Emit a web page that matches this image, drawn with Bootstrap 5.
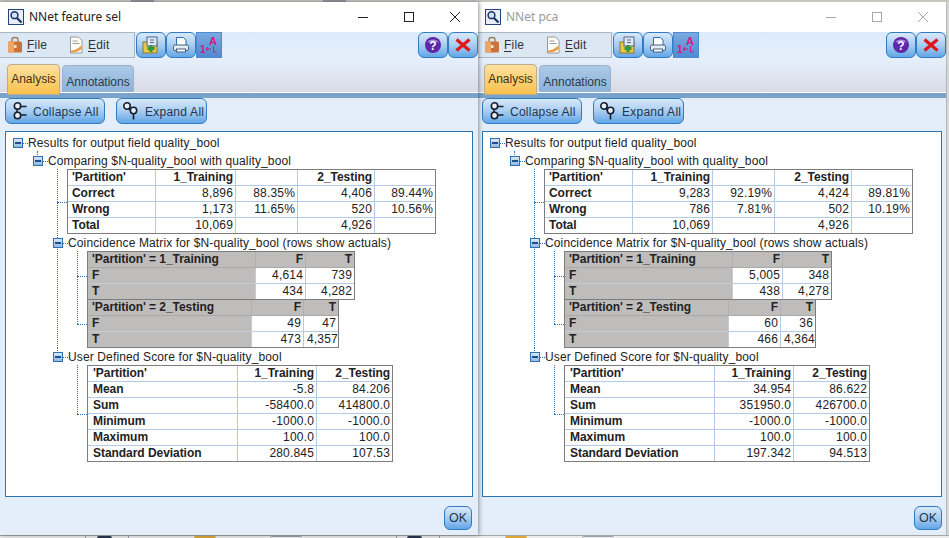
<!DOCTYPE html>
<html lang="en">
<head>
    <meta charset="UTF-8">
    <meta name="viewport" content="width=device-width, initial-scale=1.0">
    <title>NNet analysis</title>
    <link href="https://cdn.jsdelivr.net/npm/bootstrap@5.3.0/dist/css/bootstrap.min.css" rel="stylesheet">
    <style>
        html, body { height: 538px; overflow: hidden; }
        body {
            margin: 0;
            font-family: "Liberation Sans", Arial, sans-serif;
            font-size: 12px;
            color: #222;
            background: #dcdcdc;
        }
        .desk {
            position: relative;
            height: 538px;
            padding: 2px 0 3px;
            background: linear-gradient(#c9c5bf 0 2px, #d6d6d6 2px 535px, #a6a6a6 535px 536px, #ececec 536px);
        }
        .desk-bit { position: absolute; display: block; }
        .bit-top-a { left: 131px; top: 0; width: 23px; height: 2px; background: #8f939e; }
        .bit-top-b { left: 323px; top: 0; width: 23px; height: 2px; background: #8f939e; }
        .bit-frame { bottom: 0; width: 44px; height: 2px; border: solid #9aa0ae; border-width: 0 1px; }
        .bit-dark { bottom: 0; width: 15px; height: 2px; background: #26304a; border-radius: 6px 6px 0 0; }
        .bit-gold { bottom: 0; width: 22px; height: 2px; background: #dca436; border-radius: 10px 10px 0 0; }
        .bit-ring { bottom: 0; width: 32px; height: 2px; border-top: 1px solid #9aa0ae; border-radius: 14px 14px 0 0; }
        .at-85 { left: 85px; }
        .at-97 { left: 97px; }
        .at-194 { left: 194px; }
        .at-270 { left: 270px; }
        .at-396 { left: 396px; }
        .at-407 { left: 407px; }
        .at-505 { left: 505px; }
        .at-582 { left: 582px; }

        .win {
            position: relative;
            display: flex;
            flex-direction: column;
            flex: none;
            background: #e3eefa;
        }
        .win-a { width: 478px; z-index: 2; box-shadow: 1px 0 4px rgba(60, 60, 60, .55); }
        .win-b { width: 470px; margin-left: -1px; border-right: 1px solid #b8b8b8; }
        .win-b .win-title { color: #9a9a9a; }
        .win-b .win-ctl svg { stroke: #a8a8a8; }

        .title-bar { height: 30px; background: #fff; flex: none; }
        .title-ico { width: 16px; height: 16px; margin: 0 5px 0 8px; }
        .win-title { font-family: "Noto Sans", sans-serif; font-size: 12px; }
        .win-ctl { width: 46px; height: 30px; display: flex; align-items: center; justify-content: center; }
        .win-ctl svg { width: 12px; height: 12px; stroke: #222; fill: none; }

        .head-band {
            height: 60px;
            flex: none;
            background: linear-gradient(#dbeafb, #e5effb 45%, #d8dbe6);
            border-bottom: 1px solid #fff;
            box-sizing: content-box;
        }
        .menu-group {
            width: 135px;
            height: 26px;
            margin-right: 1px;
            background: #dbe7f3;
            border: 1px solid #a9b7c6;
            border-left: 0;
        }
        .menu-item { width: 61px; padding-left: 7px; color: #333; letter-spacing: .2px; }
        .menu-item svg { width: 16px; height: 18px; margin-right: 4px; }
        .menu-item u { text-underline-offset: 2px; }

        .blue-btn {
            --bs-btn-padding-x: 0;
            --bs-btn-padding-y: 0;
            --bs-btn-font-size: 12px;
            --bs-btn-line-height: 1;
            --bs-btn-color: #22364d;
            --bs-btn-hover-color: #22364d;
            --bs-btn-border-color: #2f7cc4;
            --bs-btn-hover-border-color: #2f7cc4;
            --bs-btn-border-radius: 6px;
            display: inline-flex;
            align-items: center;
            justify-content: center;
            background: linear-gradient(#d8e9fb, #a9cdf1 50%, #62a6e6);
        }
        .blue-btn:hover { background: linear-gradient(#d8e9fb, #a9cdf1 50%, #62a6e6); }
        .tool-btn { width: 30px; height: 26px; }
        .tool-btn svg { width: 18px; height: 18px; }
        .tool-on { background: linear-gradient(#7ba9e0, #4f8bd2); border-radius: 0; border-color: #4f8bd2; width: 26px; }
        .tool-on:hover { background: linear-gradient(#7ba9e0, #4f8bd2); }
        .tool-end { margin-left: auto; }
        .act-btn { height: 26px; letter-spacing: .25px; padding-top: 1px; justify-content: flex-start; }
        .act-btn svg { width: 18px; height: 20px; margin-top: -1px; }
        .act-collapse { width: 100px; padding-left: 6px; gap: 3px; }
        .act-expand { width: 91px; margin-left: 11px; padding-left: 5px; gap: 5px; }
        .ok-btn { width: 28px; height: 24px; --bs-btn-font-size: 12.5px; }

        .tab-row { height: 34px; --bs-nav-tabs-border-width: 0; padding-left: 7px; gap: 2px; align-items: flex-end; border: 0; }
        .tab-pill {
            display: block;
            text-align: center;
            color: #2c3a48;
            border: 1px solid #9db2c8;
            border-radius: 4px 4px 0 0;
            background: linear-gradient(#adcae8, #8db2d9);
            width: 72px;
            height: 27px;
            line-height: 32px;
        }
        .tab-on {
            width: 53px;
            height: 31px;
            line-height: 29px;
            margin-bottom: -3px;
            color: #3b3113;
            border-color: #bcae8c;
            background: linear-gradient(#fde0a0, #fbc14d);
            position: relative;
            z-index: 1;
        }
        .tab-strip { height: 5px; background: #7aa3cb; flex: none; }
        .act-row { height: 33px; flex: none; padding: 0 0 0 5px; }

        .res-panel {
            height: 366px;
            flex: none;
            background: #fff;
            border: 1px solid #2b74b0;
            padding: 3px 0 0 7px;
            overflow: hidden;
        }
        .win-a .res-panel { margin: 0 5px; }
        .win-b .res-panel { margin: 0 4px 0 5px; }
        .foot-row { flex: 1; padding: 9px 6px 0 0; }
        .win-b .foot-row { padding-right: 4px; }

        .tree-list, .tree-list ul { list-style: none; margin: 0; padding: 0; }
        .tree-list ul { margin-left: 20px; }
        .tree-item { position: relative; }
        .tree-item::before {
            content: "";
            position: absolute;
            left: 4px;
            top: -2px;
            bottom: 0;
            border-left: 1px dotted #2b74b0;
        }
        .tree-root::before { display: none; }
        .tree-node { margin-top: 2px; }
        .tree-item.tree-node:last-child::before { bottom: auto; height: 10px; }
        .tree-leaf { padding-left: 14px; }
        .tree-leaf::before { top: 0; }
        .tree-leaf:last-child::before { bottom: 50%; }
        .tree-leaf::after {
            content: "";
            position: absolute;
            left: 4px;
            top: 50%;
            width: 10px;
            border-top: 1px dotted #2b74b0;
        }
        .tree-line { height: 16px; display: flex; align-items: center; position: relative; }
        .tree-box {
            position: relative;
            z-index: 1;
            width: 10px;
            height: 10px;
            flex: none;
            border: 1px solid #2f6fb0;
            background: linear-gradient(#d9e8f8, #8fb8e4);
        }
        .tree-box::after { content: ""; position: absolute; left: 1px; right: 1px; top: 3px; height: 2px; background: #1f4f86; }
        .tree-dots { width: 5px; margin-right: 0; border-top: 1px dotted #2b74b0; flex: none; }
        .tree-text { letter-spacing: .13px; white-space: nowrap; }

        .res-table {
            --bs-table-bg: transparent;
            --bs-table-color: #222;
            table-layout: fixed;
            width: auto;
            margin: 0 0 -1px;
            border-collapse: collapse;
            font-size: 12px;
            letter-spacing: .17px;
        }
        .res-table th, .res-table td {
            height: 16px;
            padding: 0 2px 0 3px;
            line-height: 15px;
            border: 1px solid #b4cbe3;
            text-align: right;
            font-weight: 400;
            white-space: nowrap;
            box-shadow: none;
        }
        .res-table { outline: 1px solid #7d7d7d; outline-offset: -1px; }
        .res-table th { font-weight: 700; letter-spacing: -.05px; }
        .res-table th:first-child { text-align: left; padding-left: 4px; }
        .table-score th:first-child { padding-left: 5px; }
        .table-comp { width: 368px; }
        .table-comp .col-1st { width: 88px; }
        .table-comp .col-2nd { width: 80px; }
        .table-comp .col-3rd { width: 62px; }
        .table-comp .col-4th { width: 77px; }
        .table-comp .col-5th { width: 61px; }
        .table-matrix { width: 267px; }
        .table-matrix .col-1st { width: 168px; }
        .table-matrix .col-2nd { width: 50px; }
        .table-matrix .col-3rd { width: 49px; }
        .table-matrix2 { width: 251px; }
        .table-matrix2 .col-1st { width: 164px; }
        .table-matrix2 .col-2nd { width: 52px; }
        .table-matrix2 .col-3rd { width: 35px; }
        .table-score { width: 305px; }
        .table-score .col-1st { width: 150px; }
        .table-score .col-2nd { width: 79px; }
        .table-score .col-3rd { width: 76px; }
        .res-table th.gray-cell { background: #bfbdbb; border-color: #c6ccd3; }
        .res-table tr:first-child .gray-cell { border-bottom-color: #a9a9a9; border-right-color: #b0b0b0; }
    </style>
</head>
<body>

    <!-- Iconos sin texto, compartidos por las dos ventanas -->
    <svg width="0" height="0" class="d-block position-absolute">
        <symbol id="ico-search" viewBox="0 0 16 16">
            <rect x=".5" y=".5" width="15" height="15" fill="#e8eef8" stroke="#27407e"/>
            <circle cx="6.5" cy="6.2" r="3.4" fill="#cfe4f8" stroke="#1d2f66" stroke-width="1.5"/>
            <path d="M9 9l4.5 4.5" stroke="#1d2f66" stroke-width="2.2"/>
        </symbol>
        <symbol id="ico-case" viewBox="0 0 16 18">
            <path d="M5 6V3.2C5 2 6 1.5 8 1.5s3 .5 3 1.7V6" fill="none" stroke="#9b7a55" stroke-width="1.3"/>
            <rect x="1" y="5.5" width="14" height="11" rx="1.5" fill="#c9743a"/>
            <path d="M1 5.5h6v11H2.5A1.5 1.5 0 0 1 1 15z" fill="#eea565"/>
            <rect x="7" y="9" width="2.5" height="3" fill="#f6e3c2"/>
        </symbol>
        <symbol id="ico-doc" viewBox="0 0 16 18">
            <path d="M2.5 1h8l3.500 3.500V17h-11.500z" fill="#fbfbf8" stroke="#9a9a9a"/>
            <path d="M4.500 5h5M4.500 7.500h7" stroke="#9c9c9c"/>
            <path d="M3 14.500c3 0 6-1 10.500-5V13c-3 2.500-6 3.500-10.500 3.500z" fill="#ee9a3a"/>
        </symbol>
        <symbol id="ico-grid" viewBox="0 0 18 18">
            <rect x="1" y="6" width="14" height="11" fill="#e8c64a" stroke="#8e7a2a"/>
            <rect x="5" y="1" width="10" height="9" fill="#dfe8f3" stroke="#51688a"/>
            <path d="M8 4h4M8 6.500h4" stroke="#51688a"/>
            <path d="M9 9v7M5.500 12.500h7" stroke="#2f9a36" stroke-width="3"/>
        </symbol>
        <symbol id="ico-print" viewBox="0 0 18 18">
            <path d="M4.500 1.500h7L14 4v6H4.500z" fill="#fff" stroke="#2e6dae"/>
            <rect x="1.500" y="9" width="15" height="5.500" rx="1.500" fill="#e5edf5" stroke="#47617f"/>
            <rect x="4.500" y="13" width="9" height="3" fill="#fff" stroke="#47617f"/>
        </symbol>
        <symbol id="ico-close" viewBox="0 0 18 18">
            <path d="M2.500 3.500l13 11M15.500 3.500l-13 11" stroke="#e0161d" stroke-width="3.200"/>
        </symbol>
        <symbol id="ico-collapse" viewBox="0 0 18 20">
            <circle cx="5.500" cy="5" r="3.200" fill="#e9eef5" stroke="#161f2e" stroke-width="1.600"/>
            <circle cx="5.500" cy="14.500" r="3.200" fill="#e9eef5" stroke="#161f2e" stroke-width="1.600"/>
            <path d="M8.500 5.500h6M8.500 14h6M5 8v3.500" stroke="#161f2e" stroke-width="1.600"/>
        </symbol>
        <symbol id="ico-expand" viewBox="0 0 18 20">
            <circle cx="5" cy="5" r="3.200" fill="#e9eef5" stroke="#161f2e" stroke-width="1.600"/>
            <circle cx="11.500" cy="9.500" r="3.200" fill="#e9eef5" stroke="#161f2e" stroke-width="1.600"/>
            <path d="M11.500 12.500v6M7 8l1.500 1" stroke="#161f2e" stroke-width="1.600"/>
        </symbol>
    </svg>

    <div class="desk d-flex align-items-stretch">
        <span class="desk-bit bit-top-a"></span>
        <span class="desk-bit bit-top-b"></span>
        <span class="desk-bit bit-frame at-85"></span>
        <span class="desk-bit bit-dark at-97"></span>
        <span class="desk-bit bit-gold at-194"></span>
        <span class="desk-bit bit-ring at-270"></span>
        <span class="desk-bit bit-frame at-396"></span>
        <span class="desk-bit bit-dark at-407"></span>
        <span class="desk-bit bit-gold at-505"></span>
        <span class="desk-bit bit-ring at-582"></span>

        <!-- Ventana izquierda -->
        <section class="win win-a">
            <div class="title-bar d-flex align-items-center">
                <svg class="title-ico"><use href="#ico-search"/></svg>
                <span class="win-title flex-grow-1">NNet feature sel</span>
                <span class="win-ctl"><svg viewBox="0 0 12 12"><path d="M1 6.500h10"/></svg></span>
                <span class="win-ctl"><svg viewBox="0 0 12 12"><rect x="1.500" y="1.500" width="9" height="9"/></svg></span>
                <span class="win-ctl"><svg viewBox="0 0 12 12"><path d="M1 1l10 10M11 1L1 11"/></svg></span>
            </div>
            <div class="head-band d-flex flex-column">
                <div class="d-flex">
                    <div class="menu-group d-flex align-items-center">
                        <span class="menu-item d-flex align-items-center"><svg><use href="#ico-case"/></svg><span><u>F</u>ile</span></span>
                        <span class="menu-item d-flex align-items-center"><svg><use href="#ico-doc"/></svg><span><u>E</u>dit</span></span>
                    </div>
                    <button type="button" class="btn blue-btn tool-btn"><svg><use href="#ico-grid"/></svg></button>
                    <button type="button" class="btn blue-btn tool-btn"><svg><use href="#ico-print"/></svg></button>
                    <button type="button" class="btn blue-btn tool-btn tool-on"><svg viewBox="0 0 18 18"><text x="9" y="9" font-family="Liberation Sans, sans-serif" font-size="11" font-weight="700" fill="#d4187f">A</text><text x="0" y="17" font-family="Liberation Sans, sans-serif" font-size="10" font-weight="700" fill="#d4187f">1</text><path d="M6 13h5M8 11l-2 2 2 2M13.500 10v6h3" fill="none" stroke="#d4187f"/></svg></button>
                    <button type="button" class="btn blue-btn tool-btn tool-end"><svg viewBox="0 0 18 18"><circle cx="9" cy="9" r="8" fill="#5d27a8"/><path d="M3 7a6.500 5.500 0 0 1 12 0c-3-2-9-2-12 0z" fill="#a98ade"/><text x="9" y="13.500" text-anchor="middle" font-family="Liberation Sans, sans-serif" font-size="12" font-weight="700" fill="#fff">?</text></svg></button>
                    <button type="button" class="btn blue-btn tool-btn"><svg><use href="#ico-close"/></svg></button>
                </div>
                <ul class="nav nav-tabs tab-row">
                    <li class="nav-item"><a class="tab-pill tab-on text-decoration-none" href="#">Analysis</a></li>
                    <li class="nav-item"><a class="tab-pill text-decoration-none" href="#">Annotations</a></li>
                </ul>
            </div>
            <div class="tab-strip"></div>
            <div class="act-row d-flex align-items-start">
                <button type="button" class="btn blue-btn act-btn act-collapse"><svg><use href="#ico-collapse"/></svg>Collapse All</button>
                <button type="button" class="btn blue-btn act-btn act-expand"><svg><use href="#ico-expand"/></svg>Expand All</button>
            </div>
            <div class="res-panel">
                <ul class="tree-list">
                    <li class="tree-item tree-root">
                        <div class="tree-line"><span class="tree-box"></span><span class="tree-dots"></span><span class="tree-text">Results for output field quality_bool</span></div>
                        <ul>
                            <li class="tree-item tree-node">
                                <div class="tree-line"><span class="tree-box"></span><span class="tree-dots"></span><span class="tree-text">Comparing $N-quality_bool with quality_bool</span></div>
                                <ul>
                                    <li class="tree-item tree-leaf">
                                        <table class="table res-table table-comp">
                                            <colgroup><col class="col-1st"><col class="col-2nd"><col class="col-3rd"><col class="col-4th"><col class="col-5th"></colgroup>
                                            <tr><th>'Partition'</th><th>1_Training</th><td></td><th>2_Testing</th><td></td></tr>
                                            <tr><th>Correct</th><td>8,896</td><td>88.35%</td><td>4,406</td><td>89.44%</td></tr>
                                            <tr><th>Wrong</th><td>1,173</td><td>11.65%</td><td>520</td><td>10.56%</td></tr>
                                            <tr><th>Total</th><td>10,069</td><td></td><td>4,926</td><td></td></tr>
                                        </table>
                                    </li>
                                    <li class="tree-item tree-node">
                                        <div class="tree-line"><span class="tree-box"></span><span class="tree-dots"></span><span class="tree-text">Coincidence Matrix for $N-quality_bool (rows show actuals)</span></div>
                                        <ul>
                                            <li class="tree-item tree-leaf">
                                                <table class="table res-table table-matrix">
                                                    <colgroup><col class="col-1st"><col class="col-2nd"><col class="col-3rd"></colgroup>
                                                    <tr><th class="gray-cell">'Partition' = 1_Training</th><th class="gray-cell">F</th><th class="gray-cell">T</th></tr>
                                                    <tr><th class="gray-cell">F</th><td>4,614</td><td>739</td></tr>
                                                    <tr><th class="gray-cell">T</th><td>434</td><td>4,282</td></tr>
                                                </table>
                                            </li>
                                            <li class="tree-item tree-leaf">
                                                <table class="table res-table table-matrix2">
                                                    <colgroup><col class="col-1st"><col class="col-2nd"><col class="col-3rd"></colgroup>
                                                    <tr><th class="gray-cell">'Partition' = 2_Testing</th><th class="gray-cell">F</th><th class="gray-cell">T</th></tr>
                                                    <tr><th class="gray-cell">F</th><td>49</td><td>47</td></tr>
                                                    <tr><th class="gray-cell">T</th><td>473</td><td>4,357</td></tr>
                                                </table>
                                            </li>
                                        </ul>
                                    </li>
                                    <li class="tree-item tree-node">
                                        <div class="tree-line"><span class="tree-box"></span><span class="tree-dots"></span><span class="tree-text">User Defined Score for $N-quality_bool</span></div>
                                        <ul>
                                            <li class="tree-item tree-leaf">
                                                <table class="table res-table table-score">
                                                    <colgroup><col class="col-1st"><col class="col-2nd"><col class="col-3rd"></colgroup>
                                                    <tr><th>'Partition'</th><th>1_Training</th><th>2_Testing</th></tr>
                                                    <tr><th>Mean</th><td>-5.8</td><td>84.206</td></tr>
                                                    <tr><th>Sum</th><td>-58400.0</td><td>414800.0</td></tr>
                                                    <tr><th>Minimum</th><td>-1000.0</td><td>-1000.0</td></tr>
                                                    <tr><th>Maximum</th><td>100.0</td><td>100.0</td></tr>
                                                    <tr><th>Standard Deviation</th><td>280.845</td><td>107.53</td></tr>
                                                </table>
                                            </li>
                                        </ul>
                                    </li>
                                </ul>
                            </li>
                        </ul>
                    </li>
                </ul>
            </div>
            <div class="foot-row d-flex justify-content-end align-items-start">
                <button type="button" class="btn blue-btn ok-btn">OK</button>
            </div>
        </section>

        <!-- Ventana derecha -->
        <section class="win win-b">
            <div class="title-bar d-flex align-items-center">
                <svg class="title-ico"><use href="#ico-search"/></svg>
                <span class="win-title flex-grow-1">NNet pca</span>
                <span class="win-ctl"><svg viewBox="0 0 12 12"><path d="M1 6.500h10"/></svg></span>
                <span class="win-ctl"><svg viewBox="0 0 12 12"><rect x="1.500" y="1.500" width="9" height="9"/></svg></span>
                <span class="win-ctl"><svg viewBox="0 0 12 12"><path d="M1 1l10 10M11 1L1 11"/></svg></span>
            </div>
            <div class="head-band d-flex flex-column">
                <div class="d-flex">
                    <div class="menu-group d-flex align-items-center">
                        <span class="menu-item d-flex align-items-center"><svg><use href="#ico-case"/></svg><span><u>F</u>ile</span></span>
                        <span class="menu-item d-flex align-items-center"><svg><use href="#ico-doc"/></svg><span><u>E</u>dit</span></span>
                    </div>
                    <button type="button" class="btn blue-btn tool-btn"><svg><use href="#ico-grid"/></svg></button>
                    <button type="button" class="btn blue-btn tool-btn"><svg><use href="#ico-print"/></svg></button>
                    <button type="button" class="btn blue-btn tool-btn tool-on"><svg viewBox="0 0 18 18"><text x="9" y="9" font-family="Liberation Sans, sans-serif" font-size="11" font-weight="700" fill="#d4187f">A</text><text x="0" y="17" font-family="Liberation Sans, sans-serif" font-size="10" font-weight="700" fill="#d4187f">1</text><path d="M6 13h5M8 11l-2 2 2 2M13.500 10v6h3" fill="none" stroke="#d4187f"/></svg></button>
                    <button type="button" class="btn blue-btn tool-btn tool-end"><svg viewBox="0 0 18 18"><circle cx="9" cy="9" r="8" fill="#5d27a8"/><path d="M3 7a6.500 5.500 0 0 1 12 0c-3-2-9-2-12 0z" fill="#a98ade"/><text x="9" y="13.500" text-anchor="middle" font-family="Liberation Sans, sans-serif" font-size="12" font-weight="700" fill="#fff">?</text></svg></button>
                    <button type="button" class="btn blue-btn tool-btn"><svg><use href="#ico-close"/></svg></button>
                </div>
                <ul class="nav nav-tabs tab-row">
                    <li class="nav-item"><a class="tab-pill tab-on text-decoration-none" href="#">Analysis</a></li>
                    <li class="nav-item"><a class="tab-pill text-decoration-none" href="#">Annotations</a></li>
                </ul>
            </div>
            <div class="tab-strip"></div>
            <div class="act-row d-flex align-items-start">
                <button type="button" class="btn blue-btn act-btn act-collapse"><svg><use href="#ico-collapse"/></svg>Collapse All</button>
                <button type="button" class="btn blue-btn act-btn act-expand"><svg><use href="#ico-expand"/></svg>Expand All</button>
            </div>
            <div class="res-panel">
                <ul class="tree-list">
                    <li class="tree-item tree-root">
                        <div class="tree-line"><span class="tree-box"></span><span class="tree-dots"></span><span class="tree-text">Results for output field quality_bool</span></div>
                        <ul>
                            <li class="tree-item tree-node">
                                <div class="tree-line"><span class="tree-box"></span><span class="tree-dots"></span><span class="tree-text">Comparing $N-quality_bool with quality_bool</span></div>
                                <ul>
                                    <li class="tree-item tree-leaf">
                                        <table class="table res-table table-comp">
                                            <colgroup><col class="col-1st"><col class="col-2nd"><col class="col-3rd"><col class="col-4th"><col class="col-5th"></colgroup>
                                            <tr><th>'Partition'</th><th>1_Training</th><td></td><th>2_Testing</th><td></td></tr>
                                            <tr><th>Correct</th><td>9,283</td><td>92.19%</td><td>4,424</td><td>89.81%</td></tr>
                                            <tr><th>Wrong</th><td>786</td><td>7.81%</td><td>502</td><td>10.19%</td></tr>
                                            <tr><th>Total</th><td>10,069</td><td></td><td>4,926</td><td></td></tr>
                                        </table>
                                    </li>
                                    <li class="tree-item tree-node">
                                        <div class="tree-line"><span class="tree-box"></span><span class="tree-dots"></span><span class="tree-text">Coincidence Matrix for $N-quality_bool (rows show actuals)</span></div>
                                        <ul>
                                            <li class="tree-item tree-leaf">
                                                <table class="table res-table table-matrix">
                                                    <colgroup><col class="col-1st"><col class="col-2nd"><col class="col-3rd"></colgroup>
                                                    <tr><th class="gray-cell">'Partition' = 1_Training</th><th class="gray-cell">F</th><th class="gray-cell">T</th></tr>
                                                    <tr><th class="gray-cell">F</th><td>5,005</td><td>348</td></tr>
                                                    <tr><th class="gray-cell">T</th><td>438</td><td>4,278</td></tr>
                                                </table>
                                            </li>
                                            <li class="tree-item tree-leaf">
                                                <table class="table res-table table-matrix2">
                                                    <colgroup><col class="col-1st"><col class="col-2nd"><col class="col-3rd"></colgroup>
                                                    <tr><th class="gray-cell">'Partition' = 2_Testing</th><th class="gray-cell">F</th><th class="gray-cell">T</th></tr>
                                                    <tr><th class="gray-cell">F</th><td>60</td><td>36</td></tr>
                                                    <tr><th class="gray-cell">T</th><td>466</td><td>4,364</td></tr>
                                                </table>
                                            </li>
                                        </ul>
                                    </li>
                                    <li class="tree-item tree-node">
                                        <div class="tree-line"><span class="tree-box"></span><span class="tree-dots"></span><span class="tree-text">User Defined Score for $N-quality_bool</span></div>
                                        <ul>
                                            <li class="tree-item tree-leaf">
                                                <table class="table res-table table-score">
                                                    <colgroup><col class="col-1st"><col class="col-2nd"><col class="col-3rd"></colgroup>
                                                    <tr><th>'Partition'</th><th>1_Training</th><th>2_Testing</th></tr>
                                                    <tr><th>Mean</th><td>34.954</td><td>86.622</td></tr>
                                                    <tr><th>Sum</th><td>351950.0</td><td>426700.0</td></tr>
                                                    <tr><th>Minimum</th><td>-1000.0</td><td>-1000.0</td></tr>
                                                    <tr><th>Maximum</th><td>100.0</td><td>100.0</td></tr>
                                                    <tr><th>Standard Deviation</th><td>197.342</td><td>94.513</td></tr>
                                                </table>
                                            </li>
                                        </ul>
                                    </li>
                                </ul>
                            </li>
                        </ul>
                    </li>
                </ul>
            </div>
            <div class="foot-row d-flex justify-content-end align-items-start">
                <button type="button" class="btn blue-btn ok-btn">OK</button>
            </div>
        </section>
    </div>

</body>
</html>
